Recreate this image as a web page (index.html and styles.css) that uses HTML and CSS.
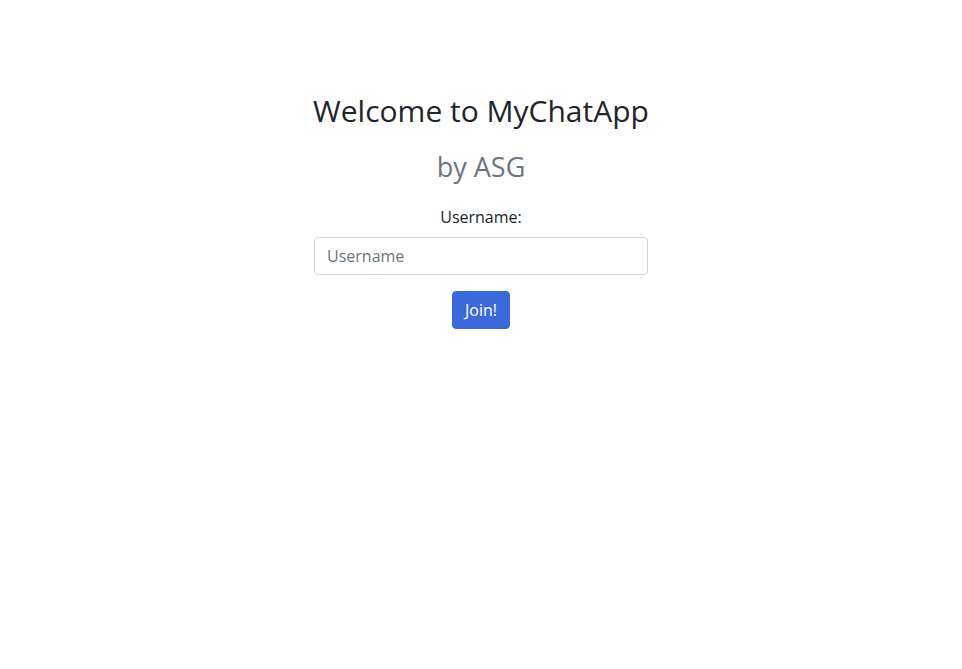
FILE: index.html
```html
<!DOCTYPE html>
<html>
<head>
<meta charset="utf-8">
<link rel="stylesheet" href="styles.css">
</head>
<body>
<main class="page">
  <div class="panel">
    <h1 class="title">Welcome to MyChatApp</h1>
    <h2 class="subtitle">by ASG</h2>
    <label class="label" for="username">Username:</label>
    <input class="input" id="username" type="text" placeholder="Username">
    <button class="btn">Join!</button>
  </div>
</main>
</body>
</html>
```
FILE: styles.css
```css
html, body {
  margin: 0;
  padding: 0;
  background: #fff;
}
body {
  font-family: "Open Sans", "Noto Sans", sans-serif;
  color: #212529;
  font-size: 16px;
}
.page {
  display: flex;
  justify-content: center;
  padding-top: 88px;
}
.panel {
  width: 334px;
  display: flex;
  flex-direction: column;
  align-items: center;
}
.title {
  margin: 0;
  font-size: 30px;
  font-weight: 400;
  line-height: 46px;
  white-space: nowrap;
}
.subtitle {
  margin: 13px 0 0;
  font-size: 27px;
  font-weight: 400;
  line-height: 40px;
  color: #6c757d;
}
.label {
  margin-top: 18px;
  font-size: 16px;
  line-height: 24px;
}
.input {
  margin-top: 8px;
  box-sizing: border-box;
  width: 100%;
  height: 38px;
  padding: 6px 12px;
  border: 1px solid #ced4da;
  border-radius: 4px;
  font-family: inherit;
  font-size: 16px;
  color: #212529;
  outline: none;
}
.input::placeholder {
  color: #6c757d;
}
.btn {
  margin-top: 16px;
  box-sizing: border-box;
  height: 38px;
  padding: 6px 12px;
  border: 1px solid #3b69d9;
  background: #3b69d9;
  color: #fff;
  border-radius: 4px;
  font-family: inherit;
  font-size: 16px;
}
```
